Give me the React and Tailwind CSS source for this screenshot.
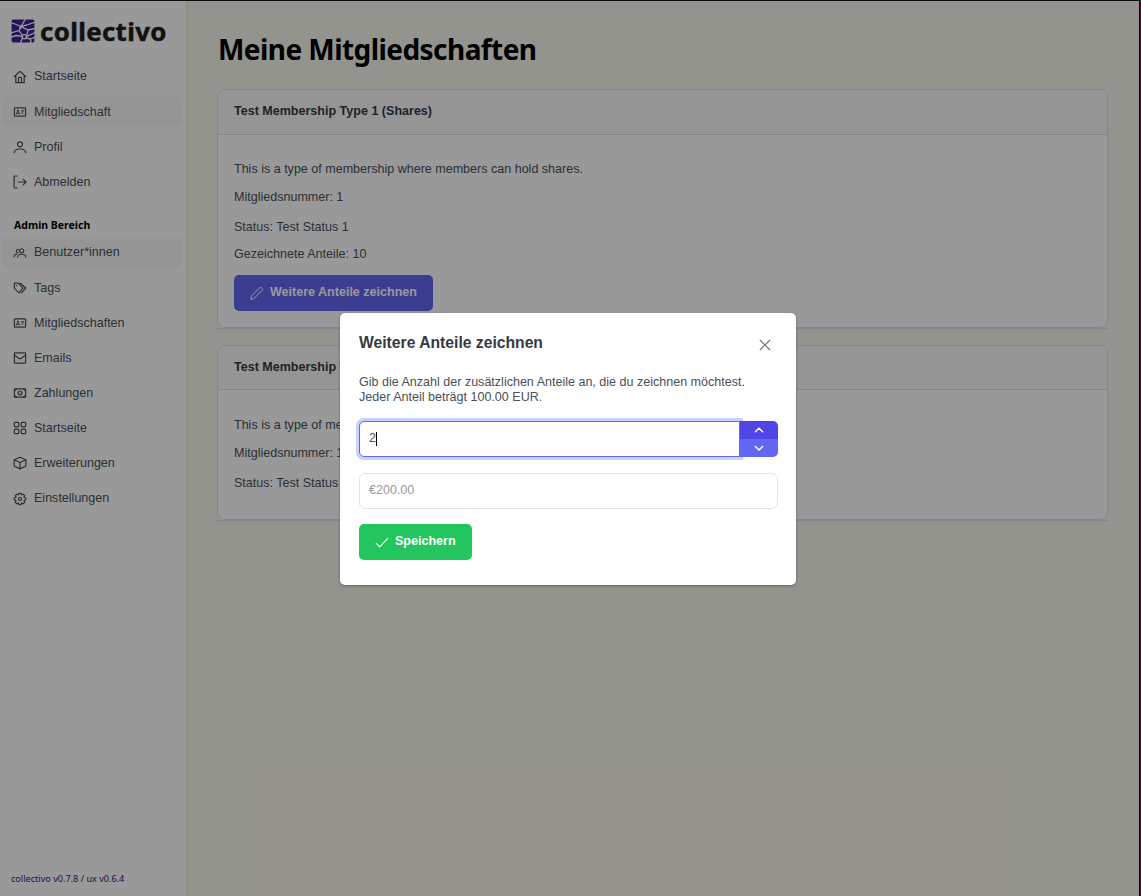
import React from "react";

const Svg = ({ size = 14, sw = 1.2, className = "", children }) => (
  <svg width={size} height={size} viewBox="0 0 14 14" fill="none" stroke="currentColor" strokeWidth={sw} strokeLinecap="round" strokeLinejoin="round" className={"shrink-0 " + className}>
    {children}
  </svg>
);

const Home = () => (
  <Svg>
    <path d="M1.200 6.700 6.400 1.700q.6-.5 1.200 0l5.200 5M2.800 5.500v7.200h8.400V5.500M5.500 12.700V7.900q0-.6.6-.6h1.800q.6 0 .6.6v4.800" />
  </Svg>
);
const IdCard = () => (
  <Svg>
    <rect x="1.400" y="2.900" width="11.200" height="8.200" rx=".6" />
    <circle cx="4.900" cy="5.900" r="1.100" fill="currentColor" stroke="none" />
    <path d="M3.400 8.900c.3-1.300 2.800-1.300 3.100 0M8.700 5.900h1.900M8.700 8h1.200" />
  </Svg>
);
const User = () => (
  <Svg>
    <circle cx="7" cy="4.300" r="2.500" />
    <path d="M1.300 12.500c.4-2.800 2.400-3.500 5.700-3.500s5.300.7 5.700 3.500" />
  </Svg>
);
const Exit = () => (
  <Svg>
    <path d="M4.300 1H2.200Q1.100 1 1.100 2.100v9.800q0 1.100 1.100 1.100h2.100M5.200 7h7.900M10.200 4.200 13 7l-2.800 2.800" />
  </Svg>
);
const Users = () => (
  <Svg sw={1.1}>
    <circle cx="8.700" cy="4.700" r="2" />
    <path d="M4.600 11.200c.3-2.100 1.600-2.900 4.100-2.900s3.800.8 4.100 2.900M5.200 6.700a1.600 1.600 0 1 1 .4-3M1.200 10.600c.1-1.600.8-2.400 2.400-2.500" />
  </Svg>
);
const Tags = () => (
  <Svg>
    <path d="M1.400 2.200H5.300L10 7.100 6 11.900 1.400 7.300zM7.400 2.200 12.700 7 8.500 11.900" />
    <circle cx="3.700" cy="4.600" r=".7" fill="currentColor" stroke="none" />
  </Svg>
);
const Mail = () => (
  <Svg>
    <rect x="1.400" y="1.900" width="11.200" height="10.300" rx=".6" />
    <path d="m1.600 4.200 4.400 3.200q1 .6 2 0l4.400-3.200" />
  </Svg>
);
const Cash = () => (
  <Svg>
    <rect x="1.400" y="2.800" width="11.200" height="8.400" rx=".5" />
    <circle cx="7" cy="7" r="2" />
    <circle cx="7" cy="7" r=".5" fill="currentColor" stroke="none" />
    <path d="M1.500 4.900 3.400 3M12.500 4.900 10.600 3M1.500 9.100l1.900 1.900M12.500 9.100 10.600 11" />
  </Svg>
);
const Grid = () => (
  <Svg>
    <rect x="1.300" y="1.300" width="4.500" height="4.500" rx="1" />
    <rect x="8.200" y="1.300" width="4.500" height="4.500" rx="1" />
    <rect x="1.300" y="8.200" width="4.500" height="4.500" rx="1" />
    <rect x="8.200" y="8.200" width="4.500" height="4.500" rx="1" />
  </Svg>
);
const Box = () => (
  <Svg>
    <path d="M7 1.200 12.900 3.700v6.300L7 12.900 1.100 10V3.700zM1.100 3.800 7 6.500l5.900-2.700M7 6.500v6.300" />
  </Svg>
);
const Gear = () => (
  <Svg>
    <path d="M6 1.300h2l.5 1.500 1.600-.6 1.500 1.500-.7 1.500L12.700 6v2l-1.700.6.7 1.700-1.500 1.500-1.700-.7L8 12.700H6l-.5-1.600-1.700.7-1.500-1.500L3 8.600 1.300 8V6L3 5.200l-.6-1.500 1.500-1.500 1.600.6z" />
    <circle cx="7" cy="7" r="1.500" />
  </Svg>
);

const Logo = () => (
  <svg width="24" height="24" viewBox="0 0 24 24" className="shrink-0">
    <rect x=".6" y=".6" width="22.800" height="22.800" rx="1.600" fill="#3f2493" />
    <g stroke="#fff" strokeWidth="1.300" fill="none" strokeLinecap="butt">
      <path d="M0 3.500 4 5l6 2.500L14.500 0M10 7.500 16 6l8-3M10 7.500 8 11.500 0 14M8 11.500 11.500 16.500M10 7.500 17 11l7-1.500M17 11l-1.500 6.500L24 13.500M0 18l5.500-1.500 6 .8M11.500 18.500 9.500 24M15 19l4.500 1L24 18M19.500 20l.5 4" />
    </g>
    <circle cx="13.300" cy="17.700" r="2.100" fill="#3f2493" stroke="#fff" strokeWidth="1.300" />
    <circle cx="9.800" cy="7.900" r="1.500" fill="#fff" />
  </svg>
);

const Item = ({ icon: Icon, label, active }) => (
  <div className={"flex h-[31.150px] items-center gap-[7px] rounded-md pl-[11px] text-[#495057] " + (active ? "bg-[#f9f9f9]" : "")}>
    <Icon />
    <span className="pt-[0.500px]">{label}</span>
  </div>
);

const Card = ({ title, className, headerClass, bodyClass, children }) => (
  <div className={"border-b border-[#dcdeea] " + className}>
    <section className="h-full rounded-lg border border-[#dfe0e8] bg-white">
      <header className={"rounded-t-lg border-b border-[#dcdde6] bg-[#f9f9fa] pt-[13px] pl-4 leading-[16px] font-bold text-[#343a40] " + headerClass}>{title}</header>
      <div className={"flex flex-col items-start pl-4 leading-[16px] text-[#495057] " + bodyClass}>{children}</div>
    </section>
  </div>
);

export default function App() {
  return (
    <div className="flex h-[896px] w-[1141px] overflow-hidden border-t border-[#0a0a0a] font-['Liberation_Sans',sans-serif] text-[12.540px]">
      <div className="relative flex w-[1139px] bg-[#f6f7eb]">
        <aside className="flex w-[186px] flex-col bg-white shadow-[0_0_3px_rgba(0,0,0,0.12)]">
          <div className="flex h-[60px] items-center gap-[5px] pl-[11px]">
            <Logo />
            <span className="pt-[2px] font-['Noto_Sans','Open_Sans',sans-serif] text-[25.800px] leading-none font-bold tracking-[0.350px] text-[#1d1d20] [-webkit-text-stroke:0.5px_#1d1d20]">collectivo</span>
          </div>
          <nav className="flex w-[182px] flex-col gap-1 pl-[2px]">
            <Item icon={Home} label="Startseite" />
            <Item icon={IdCard} label="Mitgliedschaft" active />
            <Item icon={User} label="Profil" />
            <Item icon={Exit} label="Abmelden" />
          </nav>
          <div className="mt-[19px] h-[17px] pl-[14px] font-['Noto_Sans','Open_Sans',sans-serif] text-[10.500px] leading-[17px] font-bold text-black">Admin Bereich</div>
          <nav className="mt-[3.500px] flex w-[182px] flex-col gap-1 pl-[2px]">
            <Item icon={Users} label="Benutzer*innen" active />
            <Item icon={Tags} label="Tags" />
            <Item icon={IdCard} label="Mitgliedschaften" />
            <Item icon={Mail} label="Emails" />
            <Item icon={Cash} label="Zahlungen" />
            <Item icon={Grid} label="Startseite" />
            <Item icon={Box} label="Erweiterungen" />
            <Item icon={Gear} label="Einstellungen" />
          </nav>
          <div className="mt-auto pb-[10px] pl-[11px] font-['Noto_Sans','Open_Sans',sans-serif] text-[9.100px] leading-[14px] text-[#3b2080]">collectivo v0.7.8 / ux v0.6.4</div>
        </aside>

        <main className="flex flex-1 flex-col pt-[28px] pr-[31px] pl-[31px]">
          <h1 className="h-[60px] pl-px font-['Noto_Sans','Open_Sans',sans-serif] text-[28px] leading-[40px] font-bold tracking-[-0.560px] whitespace-nowrap text-black">Meine Mitgliedschaften</h1>
          <Card title="Test Membership Type 1 (Shares)" className="h-[240px]" headerClass="h-[45px]" bodyClass="pt-[26px]">
            <p>This is a type of membership where members can hold shares.</p>
            <p className="mt-3">Mitgliedsnummer: 1</p>
            <p className="mt-[14px]">Status: Test Status 1</p>
            <p className="mt-[11px]">Gezeichnete Anteile: 10</p>
            <button className="mt-[13px] flex h-[36px] w-[199px] items-center rounded-[5px] bg-[#6366f1] pl-4 font-bold text-white">
              <Svg sw={1}>
                <path d="M1.200 13c-.2-1.600 0-2.800.8-3.600l7.700-7.500c1.500-1.300 3.700.8 2.400 2.400l-7.600 7.800c-.8.8-1.900 1.100-3.300.9z" />
              </Svg>
              <span className="mb-[2px] ml-[6px]">Weitere Anteile zeichnen</span>
            </button>
          </Card>
          <Card title="Test Membership Type 2" className="mt-[16px] h-[176px]" headerClass="h-[44px]" bodyClass="pt-[27px]">
            <p>This is a type of membership without shares.</p>
            <p className="mt-3">Mitgliedsnummer: 1</p>
            <p className="mt-[14px]">Status: Test Status 1</p>
          </Card>
        </main>

        <div className="absolute inset-0 flex items-start bg-black/40 pt-[312px] pl-[340px]">
          <div role="dialog" className="flex h-[272px] w-[456px] flex-col rounded-[5px] bg-white pr-[18px] pl-[19px] shadow-[0_1px_3px_rgba(0,0,0,0.3)]">
            <div className="flex h-[62px] items-start justify-between pt-[20px]">
              <h2 className="text-[15.700px] leading-[20px] font-bold text-[#343a40]">Weitere Anteile zeichnen</h2>
              <Svg size={12} sw={1.400} className="mt-[6px] mr-[7px] text-[#6b7280]">
                <path d="m1.500 1.500 11 11M12.500 1.500l-11 11" />
              </Svg>
            </div>
            <p className="leading-[15px] text-[#495057]">
              Gib die Anzahl der zusätzlichen Anteile an, die du zeichnen möchtest.
              <br />
              Jeder Anteil beträgt 100.00 EUR.
            </p>
            <div className="mt-[16px] flex h-[36px]">
              <div className="flex w-[381px] shrink-0 items-center rounded-l-[5px] border border-[#6366f1] bg-white pl-[9px] text-[12.540px] text-[#495057] shadow-[0_0_0_3px_#c7d2fe]">
                <span className="mb-px">2</span>
                <span className="h-[14px] w-px bg-black" />
              </div>
              <div className="relative flex w-[38px] flex-col overflow-hidden rounded-r-[5px] text-white">
                <div className="flex flex-1 items-center justify-center bg-[#4f46e5]">
                  <Svg size={10} sw={2.1}>
                    <path d="m2 9.500 5-5 5 5" />
                  </Svg>
                </div>
                <div className="flex flex-1 items-center justify-center bg-[#6366f1]">
                  <Svg size={10} sw={2.1}>
                    <path d="m2 4.800 5 5 5-5" />
                  </Svg>
                </div>
              </div>
            </div>
            <div className="mt-[16px] flex h-[36px] items-center rounded-[6px] border border-[#e2e3e8] pb-[2px] pl-[9px] text-[#97999c]">€200.00</div>
            <button className="mt-[15px] flex h-[36px] w-[113px] items-center rounded-[5px] bg-[#22c55e] pl-4 font-bold text-white">
              <Svg sw={1.1}>
                <path d="m1.200 8.400 3.500 3.400L12.800 3.400" />
              </Svg>
              <span className="mb-[2px] ml-[6px]">Speichern</span>
            </button>
          </div>
        </div>
      </div>
      <div className="w-px bg-[#08060a]" />
      <div className="w-px bg-[#4a1030]" />
    </div>
  );
}
